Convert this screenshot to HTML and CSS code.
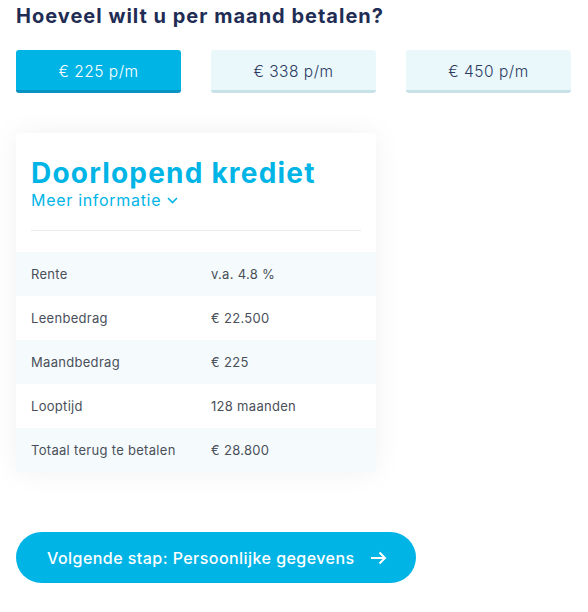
FILE: index.html
```html
<!DOCTYPE html>
<html lang="nl">
<head>
<meta charset="utf-8">
<link rel="stylesheet" href="styles.css">
</head>
<body>
<div class="page">
  <h1 class="heading">Hoeveel wilt u per maand betalen?</h1>
  <div class="options">
    <button class="opt opt-active">€ 225 p/m</button>
    <button class="opt">€ 338 p/m</button>
    <button class="opt">€ 450 p/m</button>
  </div>
  <div class="card">
    <div class="card-head">
      <h2 class="title">Doorlopend krediet</h2>
      <a class="more">Meer informatie <svg class="chev" width="11" height="7" viewBox="0 0 11 7"><path d="M1 1 L5.5 5.5 L10 1" fill="none" stroke="#00b5e6" stroke-width="1.6"/></svg></a>
      <div class="divider"></div>
    </div>
    <div class="rows">
      <div class="row alt"><span class="label">Rente</span><span class="value">v.a. 4.8 %</span></div>
      <div class="row"><span class="label">Leenbedrag</span><span class="value">€ 22.500</span></div>
      <div class="row alt"><span class="label">Maandbedrag</span><span class="value">€ 225</span></div>
      <div class="row"><span class="label">Looptijd</span><span class="value">128 maanden</span></div>
      <div class="row alt"><span class="label">Totaal terug te betalen</span><span class="value">€ 28.800</span></div>
    </div>
  </div>
  <button class="cta">Volgende stap: Persoonlijke gegevens <svg class="arrow" width="17" height="14" viewBox="0 0 17 14"><path d="M1 7 H15 M9.5 1.5 L15 7 L9.5 12.5" fill="none" stroke="#fff" stroke-width="2"/></svg></button>
</div>
</body>
</html>
```

FILE: styles.css
```css
* { box-sizing: border-box; }
html, body { margin: 0; padding: 0; background: #fff; }
body { font-family: Inter, "Open Sans", sans-serif; color: #23305a; }
.page { padding: 0 16px; display: flex; flex-direction: column; align-items: flex-start; }
.heading { margin: 4px 0 0; font-size: 20px; line-height: 24px; font-weight: 700; color: #1f2d55; letter-spacing: 1px; }
.options { display: flex; gap: 30px; margin-top: 22px; }
.opt {
  width: 165px; height: 43px; border: 0; border-bottom: 3px solid #c6e1e8; border-radius: 3px;
  background: #eaf8fc; color: #2c3a62; font-family: inherit; font-size: 15.5px; font-weight: 300;
  padding: 0; padding-top: 2px; letter-spacing: 0.5px;
}
.opt-active { background: #00b5e6; border-bottom-color: #0792c2; color: #fff; }
.card {
  margin-top: 40px; width: 360px; background: #fff; border-radius: 3px;
  box-shadow: 0 0 30px rgba(0,0,0,0.06);
}
.card-head { padding: 23px 15px 0; }
.title { margin: 0; font-size: 28px; line-height: 34px; font-weight: 700; color: #00b5e6; letter-spacing: 1.2px; }
.more { display: flex; align-items: center; gap: 6px; font-size: 16px; line-height: 20px; color: #00b5e6; font-weight: 400; letter-spacing: 0.7px; }
.chev { margin-top: 1px; }
.divider { height: 1px; background: #e8ecee; margin-top: 20px; }
.rows { margin-top: 21px; display: flex; flex-direction: column; }
.row { display: flex; align-items: center; height: 44px; padding-left: 15px; font-size: 13px; color: #4a4f5a; font-weight: 400; letter-spacing: 0.3px; }
.row.alt { background: #f5fbfd; }
.label { width: 180px; }
.cta {
  margin-top: 60px; width: 400px; height: 51px; border: 0; border-radius: 26px;
  background: #00b5e6; color: #fff; font-family: inherit; font-size: 16px; font-weight: 500;
  display: flex; align-items: center; padding: 0 0 0 31px; gap: 15px; letter-spacing: 0.45px;
}
```
